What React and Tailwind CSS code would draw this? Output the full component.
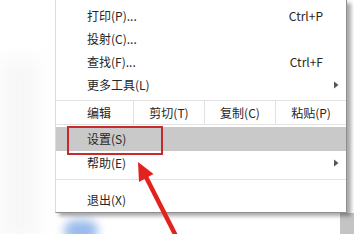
import React from "react";

const font = { fontFamily: '"Noto Sans CJK SC", "Noto Sans", sans-serif' };

function Tri() {
  return (
    <svg width="6" height="9" viewBox="0 0 6 9" className="block">
      <path d="M1 1 L5.5 4.5 L1 8 Z" fill="#555" />
    </svg>
  );
}

function Row({ label, shortcut, arrow, h = "h-[23px]", extra = "" }) {
  return (
    <div className={`relative flex items-center ${h} pl-[31px] pr-[23px] ${extra}`}>
      <span className="flex-1 text-[12px] leading-none text-[#262626]">{label}</span>
      {shortcut && <span className="text-[12px] leading-none text-[#262626]">{shortcut}</span>}
      {arrow && (
        <span className="absolute right-[7px] top-1/2 -translate-y-1/2">
          <Tri />
        </span>
      )}
    </div>
  );
}

export default function App() {
  return (
    <div className="relative w-[354px] h-[234px] overflow-hidden bg-white" style={font}>
      <div className="absolute left-[64px] top-[220px] w-[34px] h-[22px] rounded-full bg-[#9bbbec] blur-[5px]" />
      <div className="absolute left-[0px] top-[60px] w-[40px] h-[180px] bg-[#f7f7f7] blur-[10px]" />
      <div className="absolute right-0 top-[213px] w-[14px] h-[21px] bg-[#c4c4c4]" />
      <div className="relative flex">
        <div className="w-[55px] shrink-0" />
        <div className="relative w-[292px] bg-white border-l border-l-[#dcdcdc] border-r border-r-[#8f8f8f] border-b border-b-[#8f8f8f] shadow-[4px_3px_4px_rgba(0,0,0,0.35)] pt-[4px]">
          <Row label="打印(P)..." shortcut="Ctrl+P" />
          <Row label="投射(C)..." />
          <Row label="查找(F)..." shortcut="Ctrl+F" />
          <Row label="更多工具(L)" arrow />
          <div className="mt-[4px] grid grid-cols-[78px_71px_71px_1fr] h-[25px] border-t border-b border-[#e2e2e2] text-[12px] text-[#262626]">
            <div className="flex items-center pl-[31px] border-r border-[#e2e2e2]">编辑</div>
            <div className="flex items-center justify-center border-r border-[#e2e2e2]">剪切(T)</div>
            <div className="flex items-center justify-center border-r border-[#e2e2e2]">复制(C)</div>
            <div className="flex items-center justify-center">粘贴(P)</div>
          </div>
          <div className="mt-[2px] relative">
            <Row label="设置(S)" h="h-[24px]" extra="bg-[#c9c9c9]" />
            <div className="absolute left-[11px] top-[-1px] w-[96px] h-[29px] border-2 border-[#c62a2a]" />
          </div>
          <Row label="帮助(E)" h="h-[24px]" arrow />
          <div className="mt-[4px] h-px bg-[#e2e2e2]" />
          <div className="mt-[8px]">
            <Row label="退出(X)" />
          </div>
          <div className="h-px" />
        </div>
      </div>
      <svg className="absolute left-0 top-0" width="354" height="234" viewBox="0 0 354 234">
        <line x1="146" y1="177" x2="178" y2="240" stroke="#e3211d" strokeWidth="4.5" />
        <path d="M138 162 L153.5 174 L139 182 Z" fill="#e3211d" />
      </svg>
    </div>
  );
}
